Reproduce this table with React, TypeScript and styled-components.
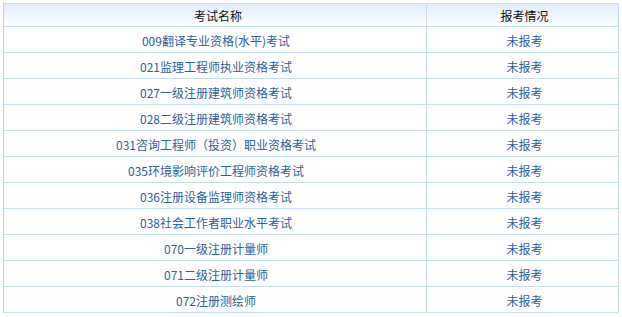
import React from "react";
import styled, { createGlobalStyle } from "styled-components";

const Global = createGlobalStyle`
  html, body { margin: 0; padding: 0; background: #ffffff; }
  body { font-family: "Noto Sans CJK SC", "Noto Sans", sans-serif; }
  * { box-sizing: border-box; }
`;

const Page = styled.div`
  padding: 3px 0 0 3px;
`;

const Table = styled.div`
  display: grid;
  grid-template-columns: 423px 192px;
  width: 616px;
  border-top: 1px solid #c4def4;
  border-left: 1px solid #b8d3ea;
`;

const HeadCell = styled.div<{ $shift?: number }>`
  height: 23px;
  display: flex;
  align-items: center;
  justify-content: center;
  background: linear-gradient(#e3edfa, #fbfdff);
  border-right: 1px solid #c4def4;
  border-bottom: 1px solid #c4def4;
  color: #111;
  font-size: 12px;
  padding-left: ${(p) => p.$shift ?? 0}px;
`;

const Cell = styled.div<{ $shift?: number }>`
  height: 26px;
  display: flex;
  align-items: center;
  justify-content: center;
  border-right: 1px solid #c4def4;
  border-bottom: 1px solid #c4def4;
  color: #2d60a0;
  font-size: 12px;
  padding-left: ${(p) => p.$shift ?? 0}px;
  padding-top: 1px;
`;

const rows = [
  "009翻译专业资格(水平)考试",
  "021监理工程师执业资格考试",
  "027一级注册建筑师资格考试",
  "028二级注册建筑师资格考试",
  "031咨询工程师（投资）职业资格考试",
  "035环境影响评价工程师资格考试",
  "036注册设备监理师资格考试",
  "038社会工作者职业水平考试",
  "070一级注册计量师",
  "071二级注册计量师",
  "072注册测绘师",
];

export default function App() {
  return (
    <>
      <Global />
      <Page>
        <Table>
          <HeadCell $shift={6}>考试名称</HeadCell>
          <HeadCell $shift={4}>报考情况</HeadCell>
          {rows.map((r) => (
            <React.Fragment key={r}>
              <Cell $shift={2}>{r}</Cell>
              <Cell $shift={4}>未报考</Cell>
            </React.Fragment>
          ))}
        </Table>
      </Page>
    </>
  );
}
